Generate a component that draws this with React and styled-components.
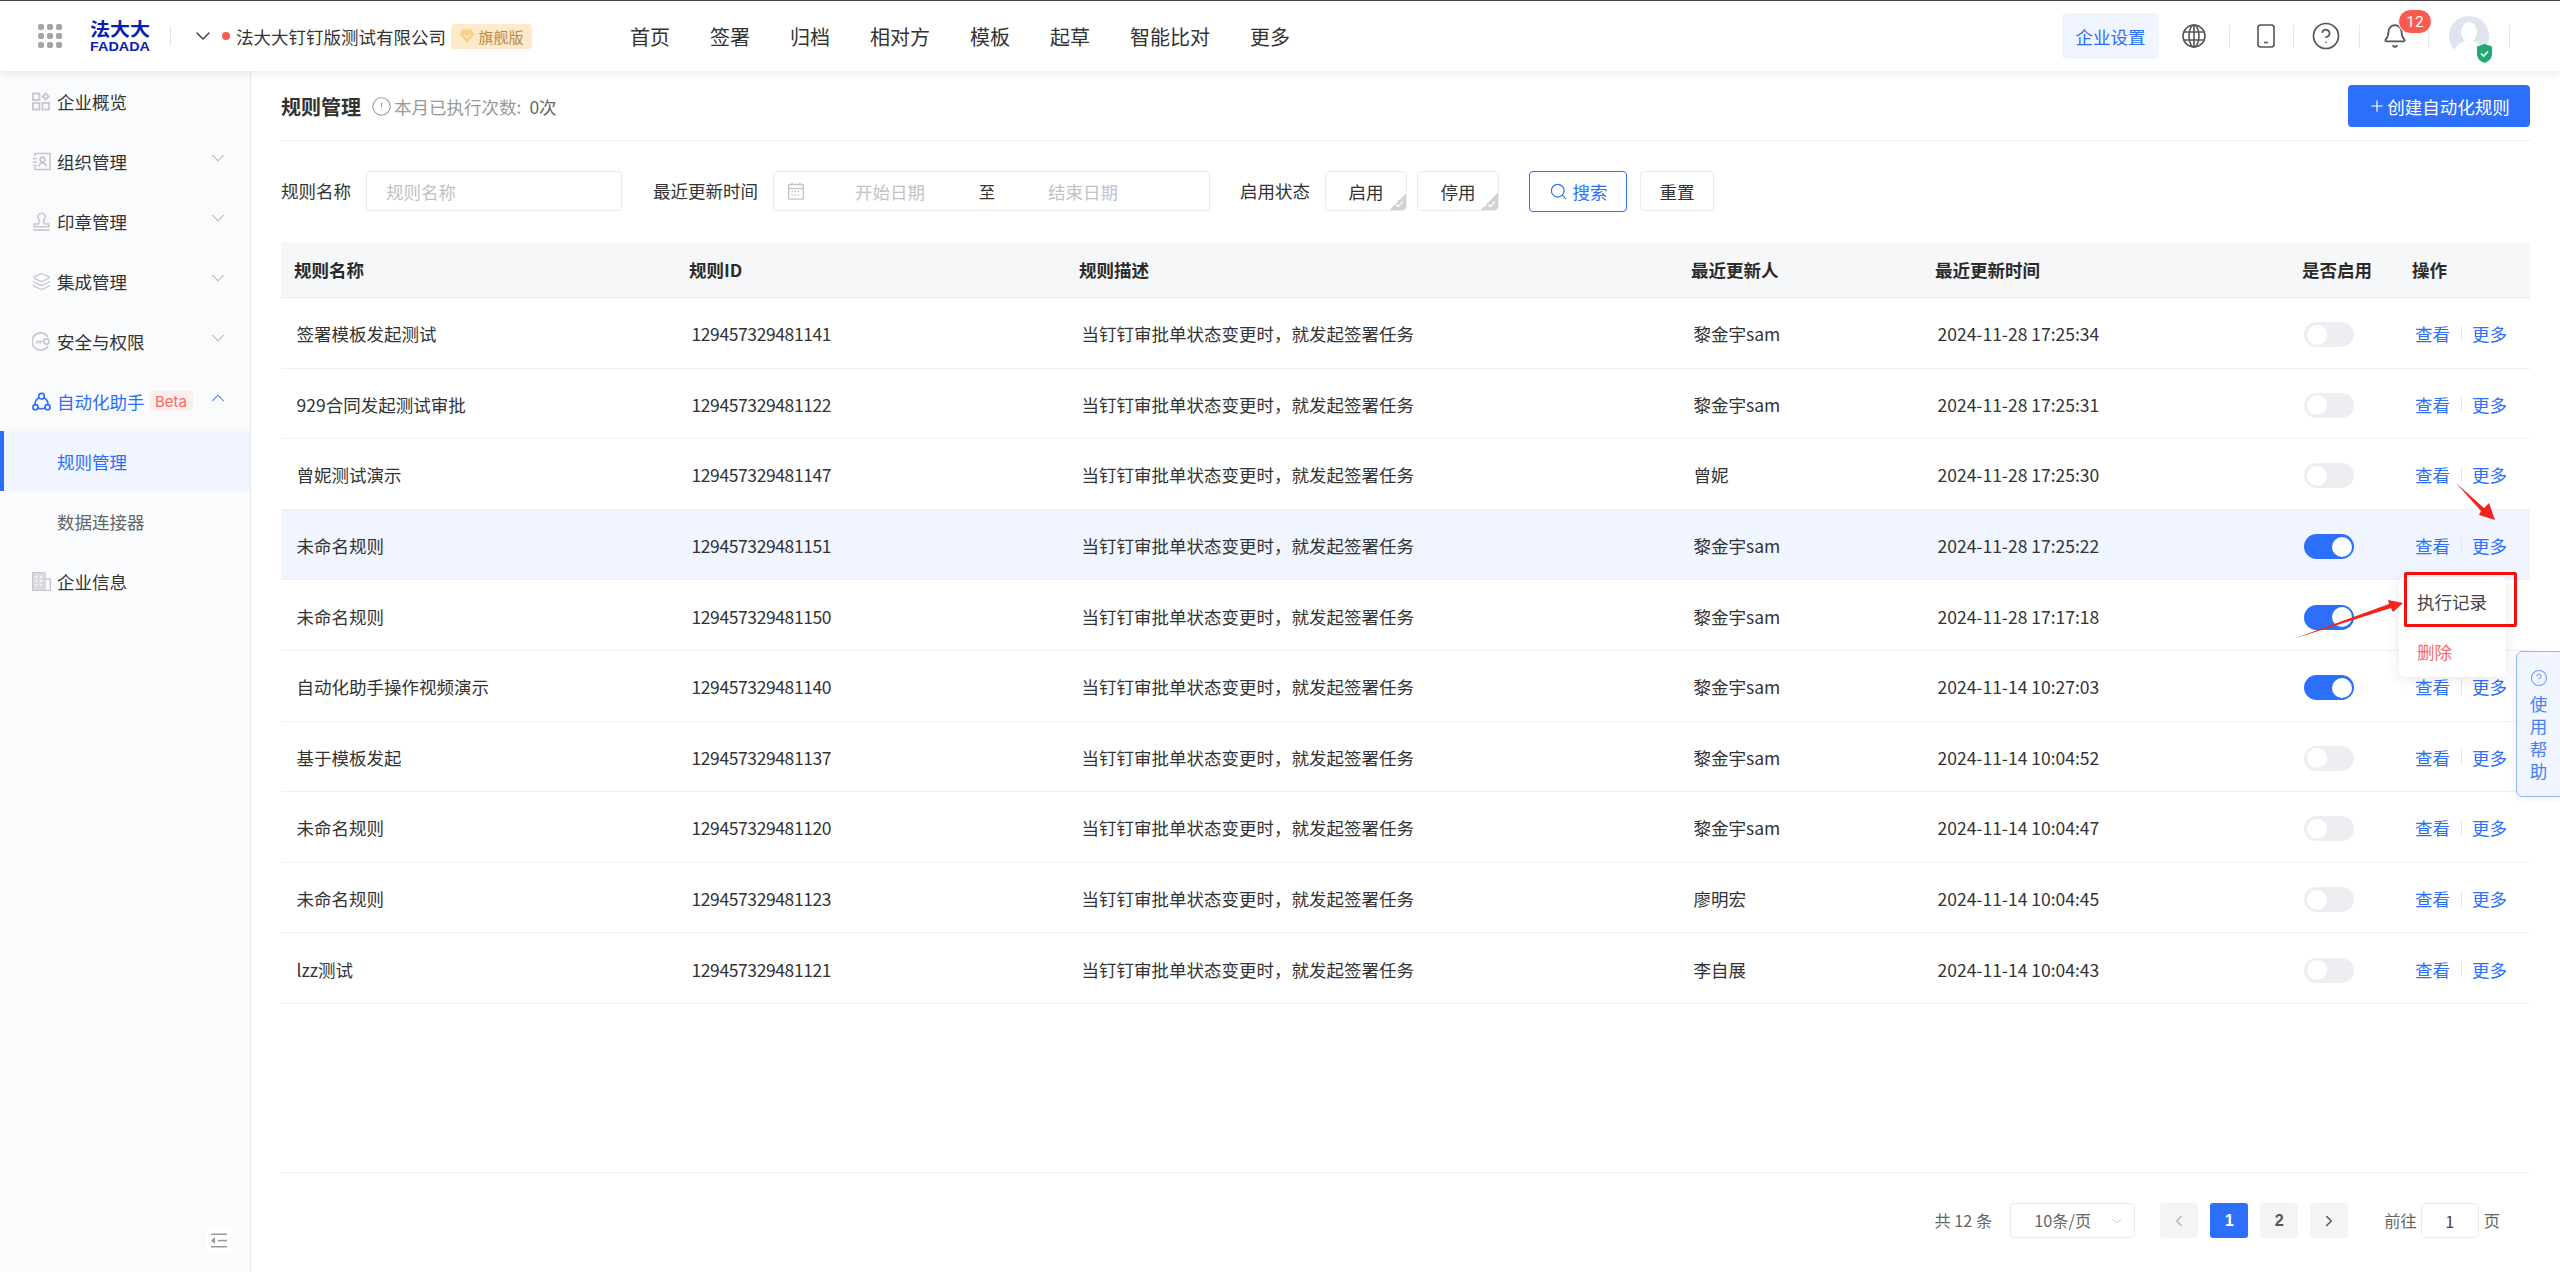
import React from "react";
import styled, { createGlobalStyle } from "styled-components";
import {
  Bell,
  ChevronDown,
  ChevronLeft,
  ChevronRight,
  ChevronUp,
  CircleAlert,
  CircleHelp,
  Layers,
  Plus,
  Search,
} from "lucide-react";

const FONT = `"Noto Sans CJK SC", "Liberation Sans", sans-serif`;
const BLUE = "#2b6ffb";

const navItems = ["首页", "签署", "归档", "相对方", "模板", "起草", "智能比对", "更多"];

const desc = "当钉钉审批单状态变更时，就发起签署任务";
const rules = [
  { name: "签署模板发起测试", id: "129457329481141", user: "黎金宇sam", time: "2024-11-28 17:25:34" },
  { name: "929合同发起测试审批", id: "129457329481122", user: "黎金宇sam", time: "2024-11-28 17:25:31" },
  { name: "曾妮测试演示", id: "129457329481147", user: "曾妮", time: "2024-11-28 17:25:30" },
  { name: "未命名规则", id: "129457329481151", user: "黎金宇sam", time: "2024-11-28 17:25:22", on: true, hover: true },
  { name: "未命名规则", id: "129457329481150", user: "黎金宇sam", time: "2024-11-28 17:17:18", on: true },
  { name: "自动化助手操作视频演示", id: "129457329481140", user: "黎金宇sam", time: "2024-11-14 10:27:03", on: true },
  { name: "基于模板发起", id: "129457329481137", user: "黎金宇sam", time: "2024-11-14 10:04:52" },
  { name: "未命名规则", id: "129457329481120", user: "黎金宇sam", time: "2024-11-14 10:04:47" },
  { name: "未命名规则", id: "129457329481123", user: "廖明宏", time: "2024-11-14 10:04:45" },
  { name: "lzz测试", id: "129457329481121", user: "李自展", time: "2024-11-14 10:04:43" },
];

const GlobalStyle = createGlobalStyle`
  html, body {
    margin: 0;
    padding: 0;
    background: #fff;
  }
  * {
    box-sizing: border-box;
  }
`;

const Page = styled.div`
  position: relative;
  width: 2560px;
  height: 1272px;
  overflow: hidden;
  display: flex;
  flex-direction: column;
  font-family: ${FONT};
  font-size: 17.5px;
  color: #333;
`;

const Header = styled.header`
  position: relative;
  z-index: 2;
  flex: none;
  height: 71px;
  border-top: 1px solid #444;
  background: #fff;
  box-shadow: 0 2px 9px rgba(0, 0, 0, 0.09);
  display: flex;
  align-items: center;
  padding: 0 50px 0 38px;
`;

const AppGrid = styled.div`
  width: 24px;
  display: grid;
  grid-template-columns: repeat(3, 6px);
  gap: 3px;
  div {
    height: 6px;
    border-radius: 2px;
    background: #a4a4a4;
  }
`;

const Logo = styled.svg`
  margin-left: 28px;
  flex: none;
  overflow: visible;
  font-weight: 700;
  fill: #0a1eb4;
`;

const HeadDivider = styled.div`
  width: 1px;
  height: 20px;
  margin-left: 20px;
  background: #e4e4e4;
`;

const CompanyDot = styled.div`
  width: 8px;
  height: 8px;
  border-radius: 50%;
  background: #f85a50;
  margin: 0 6px 0 7px;
`;

const CompanyName = styled.div`
  white-space: nowrap;
  color: #333;
`;

const PlanBadge = styled.div`
  margin-left: 5px;
  width: 81px;
  height: 25px;
  border-radius: 4px;
  background: #fdeacb;
  color: #bb8846;
  font-size: 15px;
  display: flex;
  align-items: center;
  justify-content: center;
  gap: 3px;
  white-space: nowrap;
`;

const Nav = styled.nav`
  margin-left: 98px;
  display: flex;
  gap: 40px;
  font-size: 20px;
  color: #333;
  white-space: nowrap;
`;

const HeadRight = styled.div`
  margin-left: auto;
  display: flex;
  align-items: center;
`;

const SettingButton = styled.div`
  width: 97px;
  height: 46px;
  border-radius: 4px;
  background: #f0f5ff;
  color: ${BLUE};
  display: flex;
  align-items: center;
  justify-content: center;
  white-space: nowrap;
`;

const Slot = styled.div`
  position: relative;
  width: ${(p) => p.$w}px;
  padding-left: ${(p) => p.$pl}px;
  display: flex;
  align-items: center;
  color: #555;
`;

const Sep = styled.div`
  width: 1px;
  height: 23px;
  background: #e8e8e8;
`;

const CountBadge = styled.div`
  position: absolute;
  left: 38px;
  top: -14px;
  width: 34px;
  height: 25px;
  border: 1px solid #fff;
  border-radius: 13px;
  background: #f85a50;
  color: #fff;
  font-size: 15.5px;
  font-family: "Roboto", sans-serif;
  display: flex;
  align-items: center;
  justify-content: center;
`;

const Avatar = styled.div`
  position: relative;
  width: 40px;
  height: 40px;
`;

const Shield = styled.div`
  position: absolute;
  right: -3px;
  bottom: -6px;
  width: 15px;
  height: 19px;
`;

const Body = styled.div`
  flex: 1;
  display: flex;
  min-height: 0;
`;

const Sidebar = styled.aside`
  position: relative;
  flex: none;
  width: 251px;
  background: #fafbfd;
  border-right: 1px solid #e6e7eb;
`;

const MenuItem = styled.div`
  position: relative;
  height: 60px;
  display: flex;
  align-items: center;
  padding-left: ${(p) => (p.$active ? 53 : p.$sub ? 57 : 32)}px;
  color: ${(p) => (p.$active || p.$open ? BLUE : p.$sub ? "#666" : "#333")};
  background: ${(p) => (p.$active ? "#f0f5ff" : "transparent")};
  border-left: ${(p) => (p.$active ? `4px solid ${BLUE}` : "none")};
  white-space: nowrap;
  svg.menu-icon {
    flex: none;
    width: 19px;
    height: 19px;
    margin-right: 6px;
    color: ${(p) => (p.$open ? BLUE : "#c5c7cc")};
  }
`;

const MenuCaret = styled.span`
  position: absolute;
  left: 207px;
  top: 16px;
  display: flex;
  color: ${(p) => (p.$open ? BLUE : "#a9acb3")};
`;

const BetaTag = styled.span`
  margin-left: 5px;
  width: 43px;
  height: 20px;
  border-radius: 3px;
  background: #fdeeee;
  color: #f96b63;
  font-size: 15px;
  font-family: "Inter", sans-serif;
  display: flex;
  align-items: center;
  justify-content: center;
`;

const Collapse = styled.div`
  position: absolute;
  left: 206px;
  bottom: 19px;
  width: 25px;
  height: 25px;
  border-radius: 3px;
  background: #fff;
  display: flex;
  align-items: center;
  justify-content: center;
`;

const Main = styled.main`
  flex: 1;
  min-width: 0;
  padding: 0 30px;
  display: flex;
  flex-direction: column;
`;

const TitleBar = styled.div`
  flex: none;
  height: 70px;
  padding-top: 1px;
  border-bottom: 1px solid #eee;
  display: flex;
  align-items: center;
`;

const Title = styled.h1`
  margin: 0 10px 0 0;
  font-size: 20px;
  font-weight: 700;
  color: #333;
`;

const ExecCount = styled.div`
  display: flex;
  align-items: center;
  color: #999;
  white-space: nowrap;
  b {
    margin-left: 8px;
    font-weight: 400;
    color: #666;
  }
  svg {
    margin-right: 2px;
  }
`;

const CreateButton = styled.div`
  margin-left: auto;
  width: 182px;
  height: 42px;
  border-radius: 4px;
  background: ${BLUE};
  color: #fff;
  display: flex;
  align-items: center;
  justify-content: center;
  gap: 1px;
  white-space: nowrap;
`;

const FilterBar = styled.div`
  flex: none;
  height: 101px;
  padding-top: 30px;
  display: flex;
  align-items: flex-start;
`;

const FilterLabel = styled.label`
  height: 40px;
  line-height: 40px;
  margin-left: ${(p) => p.$ml || 0}px;
  margin-right: 15px;
  white-space: nowrap;
`;

const TextInput = styled.div`
  width: ${(p) => p.$w}px;
  height: 40px;
  border: 1px solid #ebebee;
  border-radius: 4px;
  padding-left: 19px;
  color: #c0c2c7;
  display: flex;
  align-items: center;
`;

const DateRange = styled.div`
  width: 437px;
  height: 40px;
  border: 1px solid #ebebee;
  border-radius: 4px;
  padding-left: 14px;
  color: #c0c2c7;
  display: flex;
  align-items: center;
  span {
    white-space: nowrap;
  }
  b {
    font-weight: 400;
    color: #333;
    font-size: 16px;
    margin: 0 53px 0 54px;
  }
`;

const DateStart = styled.span`
  margin-left: 51px;
`;

const StatusChip = styled.div`
  position: relative;
  overflow: hidden;
  width: 82px;
  height: 40px;
  margin-right: 10px;
  border: 1px solid #ebebee;
  border-radius: 5px;
  display: flex;
  align-items: center;
  justify-content: center;
  &::after {
    content: "";
    position: absolute;
    right: 0;
    bottom: 0;
    width: 17px;
    height: 17px;
    background: linear-gradient(135deg, transparent 50%, #d2d2d2 50%);
  }
`;

const SearchButton = styled.div`
  margin-left: 20px;
  width: 98px;
  height: 41px;
  border: 1px solid ${BLUE};
  border-radius: 4px;
  color: ${BLUE};
  display: flex;
  align-items: center;
  justify-content: center;
  gap: 5px;
  white-space: nowrap;
`;

const ResetButton = styled.div`
  margin-left: 13px;
  width: 74px;
  height: 40px;
  border: 1px solid #ebebee;
  border-radius: 4px;
  display: flex;
  align-items: center;
  justify-content: center;
`;

const COLUMNS = "395px 390px 612px 244px 367px 110px 131px";

const Table = styled.div`
  flex: 1;
`;

const HeadRow = styled.div`
  height: 56px;
  display: grid;
  grid-template-columns: ${COLUMNS};
  align-items: center;
  background: #f6f7f9;
  border-bottom: 1px solid #eaebee;
  font-weight: 700;
  color: #2b2b2b;
  div {
    padding-left: 13px;
    white-space: nowrap;
  }
`;

const Row = styled.div`
  height: 70.6px;
  padding-top: 2px;
  display: grid;
  grid-template-columns: ${COLUMNS};
  align-items: center;
  border-bottom: 1px solid #eeeff2;
  background: ${(p) => (p.$hover ? "#f0f5ff" : "#fff")};
  color: #333;
  white-space: nowrap;
`;

const Cell = styled.div`
  padding-left: 15.5px;
`;

const IdCell = styled(Cell)`
  letter-spacing: -0.4px;
`;

const Toggle = styled.div`
  margin: 2px 0 0 15px;
  width: 50px;
  height: 25px;
  border-radius: 13px;
  padding: 2.5px;
  background: ${(p) => (p.$on ? BLUE : "#edeef2")};
  display: flex;
  justify-content: ${(p) => (p.$on ? "flex-end" : "flex-start")};
  &::after {
    content: "";
    width: 20px;
    height: 20px;
    border-radius: 50%;
    background: #fff;
  }
`;

const Actions = styled.div`
  padding-left: 16px;
  display: flex;
  align-items: center;
  color: ${BLUE};
  i {
    width: 1px;
    height: 16px;
    margin: 0 10.5px;
    background: #e4e6ea;
  }
`;

const Footer = styled.div`
  flex: none;
  height: 100px;
  border-top: 1px solid #eeeff3;
  padding: 30px 30px 0 0;
  display: flex;
  justify-content: flex-end;
  align-items: flex-start;
  font-size: 16.25px;
  color: #666;
`;

const Total = styled.div`
  height: 35px;
  line-height: 35px;
  margin-right: 18px;
  white-space: nowrap;
`;

const PageSize = styled.div`
  position: relative;
  width: 125px;
  height: 35px;
  border: 1px solid #ebebee;
  border-radius: 4px;
  padding-left: 23px;
  line-height: 33px;
  margin-right: 25px;
  white-space: nowrap;
  svg {
    position: absolute;
    right: 9px;
    top: 9px;
    color: #c9cbd0;
  }
`;

const PageButton = styled.div`
  width: 38px;
  height: 35px;
  margin-right: ${(p) => p.$mr ?? 12}px;
  border-radius: 3px;
  background: ${(p) => (p.$current ? BLUE : "#f4f4f5")};
  color: ${(p) => (p.$current ? "#fff" : p.$disabled ? "#b8b8b8" : "#555")};
  font-weight: 700;
  font-family: "Liberation Sans", sans-serif;
  display: flex;
  align-items: center;
  justify-content: center;
`;

const JumpText = styled.div`
  height: 35px;
  line-height: 35px;
  white-space: nowrap;
`;

const JumpInput = styled.div`
  width: 58px;
  height: 35px;
  margin: 0 5px 0 4px;
  border: 1px solid #ebebee;
  border-radius: 5px;
  color: #444;
  display: flex;
  align-items: center;
  justify-content: center;
`;

const Dropdown = styled.div`
  position: absolute;
  z-index: 3;
  left: 2399px;
  top: 577px;
  width: 107px;
  height: 100px;
  border-radius: 5px;
  background: #fff;
  box-shadow: 0 2px 14px rgba(0, 0, 0, 0.1);
  padding-left: 18px;
  display: flex;
  flex-direction: column;
  color: #444;
  white-space: nowrap;
`;

const DropItem = styled.div`
  height: 50px;
  line-height: 50px;
  color: ${(p) => (p.$danger ? "#f96b63" : "#444")};
`;

const RedFrame = styled.div`
  position: absolute;
  z-index: 4;
  left: 2404px;
  top: 572px;
  width: 113px;
  height: 55px;
  border: 3px solid #f30f0f;
  border-radius: 2px;
`;

const HelpTab = styled.div`
  position: absolute;
  z-index: 3;
  right: -1px;
  top: 651px;
  width: 45px;
  height: 146px;
  border: 1px solid #94b7fb;
  border-radius: 6px 0 0 6px;
  background: #f0f5ff;
  color: #4a80ee;
  padding-top: 17px;
  display: flex;
  flex-direction: column;
  align-items: center;
  line-height: 22.3px;
  box-shadow: 0 2px 10px rgba(0, 0, 0, 0.06);
  svg {
    margin-bottom: 6px;
    color: #6f9bf5;
  }
`;

const Annotations = styled.svg`
  position: absolute;
  z-index: 5;
  left: 0;
  top: 0;
  pointer-events: none;
`;

function OverviewIcon() {
  return (
    <svg className="menu-icon" viewBox="0 0 19 19" fill="none" stroke="currentColor" strokeWidth="1.8">
      <rect x="1" y="1.5" width="6.5" height="6.5" />
      <rect x="1" y="11" width="6.5" height="6.5" />
      <rect x="10.5" y="11" width="6.5" height="6.5" />
      <path d="M13.7 1.5l3 3-3 3-3-3z" />
    </svg>
  );
}

function ContactIcon() {
  return (
    <svg className="menu-icon" viewBox="0 0 19 19" fill="none" stroke="currentColor" strokeWidth="1.6">
      <path d="M3 4V1.5h15v16H3V15" />
      <path d="M1 6.5h4M1 10h4M1 13.5h4" />
      <circle cx="10.5" cy="7.5" r="2.4" />
      <path d="M6.8 14.5c.6-2.8 2-3.6 3.7-3.6s3.1.8 3.7 3.6" />
    </svg>
  );
}

function StampIcon() {
  return (
    <svg className="menu-icon" viewBox="0 0 19 19" fill="none" stroke="currentColor" strokeWidth="1.6">
      <path d="M9.5 1.2a3.6 3.6 0 0 0-3.6 3.6c0 2 1.6 2.8 1.6 4.4 0 1.2-.6 2.2-1.4 2.8H2.2v2.8h14.6V12H13c-.8-.6-1.4-1.6-1.4-2.8 0-1.6 1.6-2.4 1.6-4.4a3.6 3.6 0 0 0-3.7-3.6z" />
      <path d="M1.2 18h16.6" />
    </svg>
  );
}

function KeyIcon() {
  return (
    <svg className="menu-icon" viewBox="0 0 19 19" fill="none" stroke="currentColor" strokeWidth="1.6">
      <path d="M16 5A8.6 8.6 0 1 0 16 14" />
      <circle cx="14.5" cy="9.5" r="2.6" />
      <path d="M11.8 9.5H5v2M8 9.5v2" />
    </svg>
  );
}

function FlowIcon() {
  return (
    <svg className="menu-icon" viewBox="0 0 20 20" fill="none" stroke="currentColor" strokeWidth="1.7">
      <circle cx="10" cy="4.4" r="3" />
      <circle cx="3.6" cy="16" r="2.7" />
      <circle cx="16.4" cy="16" r="2.7" />
      <path d="M7.3 6A8 8 0 0 0 3.2 13.3M12.7 6a8 8 0 0 1 4.1 7.3M6.3 16.8a9 9 0 0 0 7.4 0" />
    </svg>
  );
}

function BuildingIcon() {
  return (
    <svg className="menu-icon" viewBox="0 0 19 19">
      <rect x="0.5" y="0.5" width="12.5" height="18" fill="currentColor" opacity="0.6" />
      <path d="M0.5 0.5h12.5v18H0.5z" fill="none" stroke="currentColor" />
      <path d="M3.5 5h2M8 5h2M3.5 9h2M8 9h2M3.5 13h2M8 13h2" stroke="#fafbfd" strokeWidth="1.6" />
      <path d="M13 7h5.3v11.5H13" fill="none" stroke="currentColor" strokeWidth="1.4" />
    </svg>
  );
}

function GlobeIcon() {
  return (
    <svg width="24" height="24" viewBox="0 0 24 24" fill="none" stroke="currentColor" strokeWidth="1.6">
      <circle cx="12" cy="12" r="11" />
      <ellipse cx="12" cy="12" rx="5" ry="11" />
      <path d="M12 1v22M2 8h20M2 16h20" />
    </svg>
  );
}

function PhoneIcon() {
  return (
    <svg width="18" height="24" viewBox="0 0 18 24" fill="none" stroke="currentColor" strokeWidth="1.6">
      <rect x="1" y="1" width="16" height="22" rx="2.5" />
      <path d="M7 18.5h4" />
    </svg>
  );
}

function CalendarIcon() {
  return (
    <svg width="16" height="18" viewBox="0 0 16 18" fill="none" stroke="#c4c6cb" strokeWidth="1.4" style={{ flex: "none" }}>
      <rect x="0.7" y="2.5" width="14.6" height="14.6" rx="1" />
      <path d="M0.7 6.5h14.6M4 0.5v3M12 0.5v3" />
      <path d="M3.5 9.5h9M3.5 13h9" strokeDasharray="1.5 1.5" />
    </svg>
  );
}

function CornerCheck() {
  return (
    <svg width="9" height="8" viewBox="0 0 9 8" fill="none" stroke="#fff" strokeWidth="1.3" style={{ position: "absolute", right: 2, bottom: 2, zIndex: 1 }}>
      <path d="M1 4.5l2.2 2L8 1.5" />
    </svg>
  );
}

const menu = [
  { label: "企业概览", Icon: OverviewIcon },
  { label: "组织管理", Icon: ContactIcon, caret: true },
  { label: "印章管理", Icon: StampIcon, caret: true },
  { label: "集成管理", caret: true, Icon: () => <Layers className="menu-icon" strokeWidth={1.6} /> },
  { label: "安全与权限", Icon: KeyIcon, caret: true },
];

export default function App() {
  return (
    <Page>
      <GlobalStyle />
      <Header>
        <AppGrid>
          {Array.from({ length: 9 }).map((_, i) => (
            <div key={i} />
          ))}
        </AppGrid>
        <Logo width="60" height="50" viewBox="0 0 60 50">
          <text x="0" y="25" fontSize="18" textLength="60" lengthAdjust="spacingAndGlyphs">
            法大大
          </text>
          <text x="0" y="39.5" fontSize="12.5" fontFamily="Liberation Sans, sans-serif" textLength="60" lengthAdjust="spacingAndGlyphs">
            FADADA
          </text>
        </Logo>
        <HeadDivider />
        <ChevronDown size={24} color="#444" strokeWidth={1.5} style={{ marginLeft: 20 }} />
        <CompanyDot />
        <CompanyName>法大大钉钉版测试有限公司</CompanyName>
        <PlanBadge>
          <svg width="16" height="16" viewBox="0 0 16 16">
            <path d="M4 1.5h8L15.5 6 8 15 .5 6z" fill="#f8cf8a" />
            <path d="M5 6.5l3 3 3-3" fill="none" stroke="#fdeacb" strokeWidth="1.4" />
          </svg>
          旗舰版
        </PlanBadge>
        <Nav>
          {navItems.map((item) => (
            <span key={item}>{item}</span>
          ))}
        </Nav>
        <HeadRight>
          <SettingButton>企业设置</SettingButton>
          <Slot $w={70} $pl={23}>
            <GlobeIcon />
          </Slot>
          <Sep />
          <Slot $w={63} $pl={27}>
            <PhoneIcon />
          </Slot>
          <Sep />
          <Slot $w={65} $pl={17}>
            <CircleHelp size={30} strokeWidth={1.35} />
          </Slot>
          <Sep />
          <Slot $w={68} $pl={22}>
            <Bell size={26} strokeWidth={1.6} />
            <CountBadge>12</CountBadge>
          </Slot>
          <Sep />
          <Slot $w={80} $pl={20}>
            <Avatar>
              <svg width="40" height="40" viewBox="0 0 40 40">
                <circle cx="20" cy="20" r="20" fill="#e0e4ef" />
                <ellipse cx="20" cy="16" rx="8" ry="10" fill="#fff" />
                <path d="M5 35c2-7 8-9 11-10h8c3 1 9 3 11 10a20 20 0 0 1-30 0z" fill="#fff" />
              </svg>
              <Shield>
                <svg width="15" height="19" viewBox="0 0 15 19">
                  <path d="M7.5 0L15 2.5V10c0 4.5-3.5 7.5-7.5 9C3.5 17.5 0 14.5 0 10V2.5z" fill="#1fa971" />
                  <path d="M4 9.5l2.5 2.5L11 7.5" fill="none" stroke="#fff" strokeWidth="1.6" />
                </svg>
              </Shield>
            </Avatar>
          </Slot>
          <Sep />
        </HeadRight>
      </Header>

      <Body>
        <Sidebar>
          {menu.map(({ label, Icon, caret }) => (
            <MenuItem key={label}>
              <Icon />
              {label}
              {caret && (
                <MenuCaret>
                  <ChevronDown size={22} strokeWidth={1.1} />
                </MenuCaret>
              )}
            </MenuItem>
          ))}
          <MenuItem $open>
            <FlowIcon />
            自动化助手
            <BetaTag>Beta</BetaTag>
            <MenuCaret $open>
              <ChevronUp size={22} strokeWidth={1.1} />
            </MenuCaret>
          </MenuItem>
          <MenuItem $sub $active>
            规则管理
          </MenuItem>
          <MenuItem $sub>数据连接器</MenuItem>
          <MenuItem>
            <BuildingIcon />
            企业信息
          </MenuItem>
          <Collapse>
            <svg width="17" height="15" viewBox="0 0 17 15" fill="#999">
              <rect x="1" y="0.5" width="16" height="1.5" />
              <rect x="1" y="13" width="16" height="1.5" />
              <rect x="8" y="6.8" width="9" height="1.5" />
              <path d="M1 7.5l4-3.5v7z" />
            </svg>
          </Collapse>
        </Sidebar>

        <Main>
          <TitleBar>
            <Title>规则管理</Title>
            <ExecCount>
              <CircleAlert size={21} strokeWidth={1.2} />
              本月已执行次数:
              <b>0次</b>
            </ExecCount>
            <CreateButton>
              <Plus size={18} strokeWidth={1.6} />
              创建自动化规则
            </CreateButton>
          </TitleBar>

          <FilterBar>
            <FilterLabel>规则名称</FilterLabel>
            <TextInput $w={256}>规则名称</TextInput>
            <FilterLabel $ml={31}>最近更新时间</FilterLabel>
            <DateRange>
              <CalendarIcon />
              <DateStart>开始日期</DateStart>
              <b>至</b>
              <span>结束日期</span>
            </DateRange>
            <FilterLabel $ml={30}>启用状态</FilterLabel>
            <StatusChip>
              启用
              <CornerCheck />
            </StatusChip>
            <StatusChip>
              停用
              <CornerCheck />
            </StatusChip>
            <SearchButton>
              <Search size={19} strokeWidth={1.5} />
              搜索
            </SearchButton>
            <ResetButton>重置</ResetButton>
          </FilterBar>

          <Table>
            <HeadRow>
              <div>规则名称</div>
              <div>规则ID</div>
              <div>规则描述</div>
              <div>最近更新人</div>
              <div>最近更新时间</div>
              <div>是否启用</div>
              <div>操作</div>
            </HeadRow>
            {rules.map((rule) => (
              <Row key={rule.id} $hover={rule.hover}>
                <Cell>{rule.name}</Cell>
                <IdCell>{rule.id}</IdCell>
                <Cell>{desc}</Cell>
                <Cell>{rule.user}</Cell>
                <Cell>{rule.time}</Cell>
                <div>
                  <Toggle $on={rule.on} />
                </div>
                <Actions>
                  查看
                  <i />
                  更多
                </Actions>
              </Row>
            ))}
          </Table>

          <Footer>
            <Total>共 12 条</Total>
            <PageSize>
              10条/页
              <ChevronDown size={16} strokeWidth={1.4} />
            </PageSize>
            <PageButton $disabled>
              <ChevronLeft size={18} strokeWidth={2} />
            </PageButton>
            <PageButton $current>1</PageButton>
            <PageButton>2</PageButton>
            <PageButton $mr={36}>
              <ChevronRight size={18} strokeWidth={2} />
            </PageButton>
            <JumpText>前往</JumpText>
            <JumpInput>1</JumpInput>
            <JumpText>页</JumpText>
          </Footer>
        </Main>
      </Body>

      <Dropdown>
        <DropItem>执行记录</DropItem>
        <DropItem $danger>删除</DropItem>
      </Dropdown>
      <RedFrame />
      <HelpTab>
        <CircleHelp size={18} strokeWidth={1.4} />
        <span>使</span>
        <span>用</span>
        <span>帮</span>
        <span>助</span>
      </HelpTab>
      <Annotations width="2560" height="1272" viewBox="0 0 2560 1272">
        <polygon points="2456,483 2484,508 2489,503 2495,520 2479,515 2481,511" fill="#f5231b" />
        <polygon points="2293,639 2389,604 2388,600 2403,603 2393,612 2391,608" fill="#f5231b" />
      </Annotations>
    </Page>
  );
}
